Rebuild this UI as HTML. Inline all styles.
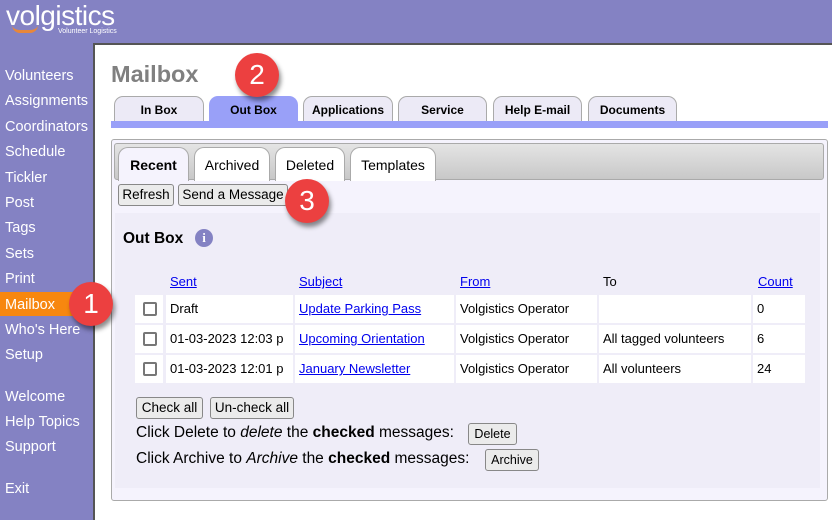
<!DOCTYPE html>
<html><head><style>
*{margin:0;padding:0;box-sizing:border-box}
html,body{width:832px;height:520px;overflow:hidden}
body{background:#8482c3;font-family:"Liberation Sans",Arial,sans-serif;position:relative}
.abs{position:absolute}
.logo{left:6px;top:0px;color:#fff;font-size:28px;letter-spacing:-0.5px}
.sub{left:58px;top:28px;color:#fff;font-size:7px}
.smile{left:12px;top:25px;width:26px;height:8px;border-bottom:3px solid #e8873a;border-radius:0 0 14px 14px}
.nav{left:5px;color:#fff;font-size:14.5px}
.mailsel{left:0;top:292px;width:80px;height:24px;background:#f7870f}
.panel{left:93px;top:43px;width:745px;height:480px;background:#fff;border-left:2px solid #555;border-top:2px solid #555}
.title{left:111px;top:61px;font-size:23.5px;font-weight:bold;color:#808080}
.tab{top:96px;height:26px;border:1px solid #aaa;border-bottom:none;border-radius:9px 9px 0 0;background:#eceaf6;font-size:12px;font-weight:bold;text-align:center;line-height:26px;color:#000}
.bar{left:111px;top:121px;width:717px;height:7px;background:#99a0f8}
.box{left:111px;top:139px;width:717px;height:362px;border:1px solid #aaa;border-radius:3px;background:#f5f3fd}
.gbar{left:114px;top:143px;width:710px;height:37px;border:1px solid #aaa;border-radius:3px;background:linear-gradient(#e4e4e4,#c8c8c8)}
.st{top:147px;height:34px;border:1px solid #aaa;border-bottom:none;border-radius:10px 10px 0 0;background:#fff;font-size:14px;text-align:center;line-height:34px}
.btn{height:22px;border:1px solid #888;border-radius:3px;background:#ebebeb;font-size:13.5px;line-height:20px;text-align:center}
.inner{left:115px;top:213px;width:705px;height:275px;background:#efedf8}
.td{height:28px;background:#fff;font-size:13px;line-height:28px;padding-left:4px}
.lk{color:#00e;text-decoration:underline}
.cb{width:14px;height:14px;border:2px solid #777;border-radius:2px;left:143px}
.badge{width:44px;height:44px;border-radius:50%;background:#ec4040;color:#fff;font-size:28px;text-align:center;line-height:44px;box-shadow:2px 4px 5px rgba(0,0,0,.45)}
.t13{font-size:13px}
.t15{font-size:15.5px}
</style></head><body>
<div class="abs logo">volgistics</div>
<div class="abs smile"></div>
<div class="abs sub">Volunteer Logistics</div>
<div class="abs mailsel"></div>
<div class="abs nav" style="top:68px">Volunteers</div>
<div class="abs nav" style="top:93px">Assignments</div>
<div class="abs nav" style="top:119px">Coordinators</div>
<div class="abs nav" style="top:144px">Schedule</div>
<div class="abs nav" style="top:170px">Tickler</div>
<div class="abs nav" style="top:195px">Post</div>
<div class="abs nav" style="top:220px">Tags</div>
<div class="abs nav" style="top:246px">Sets</div>
<div class="abs nav" style="top:271px">Print</div>
<div class="abs nav" style="top:297px">Mailbox</div>
<div class="abs nav" style="top:322px">Who's Here</div>
<div class="abs nav" style="top:347px">Setup</div>
<div class="abs nav" style="top:389px">Welcome</div>
<div class="abs nav" style="top:414px">Help Topics</div>
<div class="abs nav" style="top:439px">Support</div>
<div class="abs nav" style="top:481px">Exit</div>
<div class="abs panel"></div>
<div class="abs title">Mailbox</div>
<div class="abs tab" style="left:114px;width:90px">In Box</div>
<div class="abs tab" style="left:209px;width:89px;background:#99a0f8;border-color:#99a0f8">Out Box</div>
<div class="abs tab" style="left:303px;width:90px">Applications</div>
<div class="abs tab" style="left:398px;width:89px">Service</div>
<div class="abs tab" style="left:493px;width:89px">Help E-mail</div>
<div class="abs tab" style="left:588px;width:89px">Documents</div>
<div class="abs bar"></div>
<div class="abs box"></div>
<div class="abs gbar"></div>
<div class="abs st" style="left:118px;width:71px;background:#f5f3fd;font-weight:bold">Recent</div>
<div class="abs st" style="left:194px;width:76px">Archived</div>
<div class="abs st" style="left:275px;width:70px">Deleted</div>
<div class="abs st" style="left:350px;width:86px">Templates</div>
<div class="abs btn" style="left:118px;top:184px;width:56px">Refresh</div>
<div class="abs btn" style="left:178px;top:184px;width:110px">Send a Message</div>
<div class="abs inner"></div>
<div class="abs" style="left:123px;top:230px;font-size:15.5px;font-weight:bold">Out Box</div>
<div class="abs" style="left:195px;top:229px;width:18px;height:18px;border-radius:50%;background:#8482c3;color:#fff;font-size:13px;font-weight:bold;text-align:center;line-height:18px;font-family:'Liberation Serif',serif">i</div>
<div class="abs t13 lk" style="left:170px;top:274px">Sent</div>
<div class="abs t13 lk" style="left:299px;top:274px">Subject</div>
<div class="abs t13 lk" style="left:460px;top:274px">From</div>
<div class="abs t13" style="left:603px;top:274px">To</div>
<div class="abs t13 lk" style="left:758px;top:274px">Count</div>

<div class="abs td" style="left:135px;top:295px;width:28px"></div>
<div class="abs td" style="left:166px;top:295px;width:127px">Draft</div>
<div class="abs td" style="left:295px;top:295px;width:159px"><span class="lk">Update Parking Pass</span></div>
<div class="abs td" style="left:456px;top:295px;width:141px">Volgistics Operator</div>
<div class="abs td" style="left:599px;top:295px;width:152px"></div>
<div class="abs td" style="left:753px;top:295px;width:52px">0</div>

<div class="abs td" style="left:135px;top:325px;width:28px"></div>
<div class="abs td" style="left:166px;top:325px;width:127px">01-03-2023 12:03 p</div>
<div class="abs td" style="left:295px;top:325px;width:159px"><span class="lk">Upcoming Orientation</span></div>
<div class="abs td" style="left:456px;top:325px;width:141px">Volgistics Operator</div>
<div class="abs td" style="left:599px;top:325px;width:152px">All tagged volunteers</div>
<div class="abs td" style="left:753px;top:325px;width:52px">6</div>

<div class="abs td" style="left:135px;top:355px;width:28px"></div>
<div class="abs td" style="left:166px;top:355px;width:127px">01-03-2023 12:01 p</div>
<div class="abs td" style="left:295px;top:355px;width:159px"><span class="lk">January Newsletter</span></div>
<div class="abs td" style="left:456px;top:355px;width:141px">Volgistics Operator</div>
<div class="abs td" style="left:599px;top:355px;width:152px">All volunteers</div>
<div class="abs td" style="left:753px;top:355px;width:52px">24</div>

<div class="abs cb" style="top:302px"></div>
<div class="abs cb" style="top:332px"></div>
<div class="abs cb" style="top:362px"></div>

<div class="abs btn" style="left:136px;top:397px;width:67px">Check all</div>
<div class="abs btn" style="left:210px;top:397px;width:84px">Un-check all</div>
<div class="abs t15" style="left:136px;top:424px">Click Delete to <i>delete</i> the <b>checked</b> messages:</div>
<div class="abs btn" style="left:468px;top:423px;width:49px;font-size:12.5px">Delete</div>
<div class="abs t15" style="left:136px;top:450px">Click Archive to <i>Archive</i> the <b>checked</b> messages:</div>
<div class="abs btn" style="left:485px;top:449px;width:54px;font-size:12.5px">Archive</div>

<div class="abs badge" style="left:69px;top:282px">1</div>
<div class="abs badge" style="left:235px;top:53px">2</div>
<div class="abs badge" style="left:285px;top:179px">3</div>
</body></html>
